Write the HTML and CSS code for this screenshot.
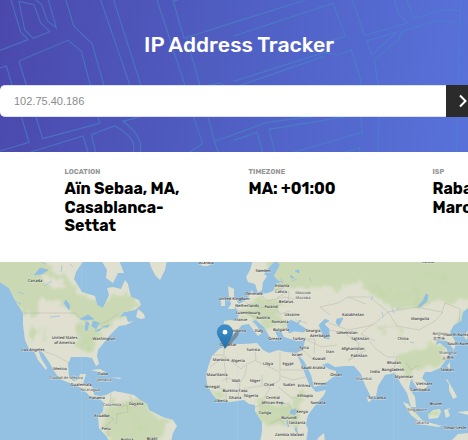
FILE: index.html
```html
<!DOCTYPE html>
<html lang="en">
<head>
<meta charset="utf-8">
<title>IP Address Tracker</title>
<link rel="stylesheet" href="styles.css">
</head>
<body>
<header class="hero">
  <svg class="streets" viewBox="0 0 1404 456" preserveAspectRatio="none" aria-hidden="true">
    <path d="M33 0L62 96L84 119L0 151M57 4L102 14L122 69L149 95L100 115L74 89ZM108 0L125 14L142 63L169 83L145 0M198 0L221 78L276 131L312 256M57 183L204 121L244 153L271 256M57 183L128 416L299 370L294 350M0 204L19 198L87 427L0 453M302 0L390 256M341 0L423 256M471 0L555 256M519 0L552 115L702 67M519 4L534 0M560 115L600 256M92 456L249 408L264 456M287 456L274 404L345 377C390 404 408 425 400 456M420 456C429 425 410 395 369 364L420 350M580 350L608 431L570 456M624 350L643 424L702 404M620 256L658 249L677 256M643 424L655 456"/>
    <path transform="translate(702 0)" d="M0 67L215 0M0 108L297 10L334 109L285 124M0 244L270 157L310 165L351 149L380 239V256M18 256L270 169M355 0L392 106L521 69L493 40L481 0M519 0L540 57L617 30L680 32M680 0L672 256M398 123L488 96L414 165ZM433 256L421 179L493 120L505 94L617 60L674 69M0 403L97 367L235 350M0 421L69 397L86 456M122 456L105 388L335 350M181 456L385 397L380 350M278 475L376 443L378 456M435 350L431 456M670 350L667 456"/>
  </svg>
  <h1 class="title">IP Address Tracker</h1>
  <form class="search">
    <input class="search-input" type="text" placeholder="102.75.40.186" aria-label="IP address">
    <button class="search-button" type="button" aria-label="Search"><svg class="chevron" viewBox="0 0 11 14"><path d="M2 1.500L7.500 7L2 12.500"/></svg></button>
  </form>
</header>
<main>
  <section class="details">
    <div class="detail"><h2 class="label">LOCATION</h2><p class="value">Aïn Sebaa, MA,<br>Casablanca-<br>Settat</p></div>
    <div class="detail"><h2 class="label">TIMEZONE</h2><p class="value zone">MA: +01:00</p></div>
    <div class="detail"><h2 class="label">ISP</h2><p class="value">Rabat<br>Maroc</p></div>
  </section>
  <svg class="map" viewBox="0 262 468 178" role="img" aria-label="World map">
    <defs>
      <filter id="soft" x="-20%" y="-20%" width="140%" height="140%">
        <feTurbulence type="fractalNoise" baseFrequency=".09" numOctaves="3" seed="4" result="noise"/>
        <feDisplacementMap in="SourceGraphic" in2="noise" scale="16" xChannelSelector="R" yChannelSelector="G" result="rough"/>
        <feGaussianBlur in="rough" stdDeviation=".8"/>
      </filter>
      <linearGradient id="pin" x1="0" y1="0" x2="0" y2="1"><stop stop-color="#3e91ce"/><stop offset="1" stop-color="#236fab"/></linearGradient>
      <path id="land" d="M0 260V282L9 288L16 302L23 313L23 325L25 340L29 349L34 351L38 360L46 370L47 368L41 358L38 350L43 353L49 362L56 374L62 380L72 384L81 388L88 394L91 398L98 397L104 403L103 411L98 417L99 428L106 436L110 442H171L173 433L177 426L173 420L163 417L155 413L149 410L147 404L139 399L134 395L125 393L114 391L106 395L101 396L94 395L93 388L88 384L83 384L86 374L80 374L78 380L73 381L69 376L68 364L71 357L86 357L92 358L96 366L99 364L97 356L98 350L106 340L110 335L119 326L126 325L134 321L128 322L126 316L119 317L124 312L135 310L141 305L139 300L131 297L128 284L125 280L121 289L113 287L107 288L109 295L103 308L97 305L95 296L82 292L74 279L76 272L84 260Z
      M149 260L151 267L155 275L160 280L165 270L167 260ZM199 260L202 266H208L213 262V260ZM101 260L107 270L106 278L113 283L118 273L124 273L119 260Z
      M136 317L138 309L144 314L145 318L141 319ZM225 298V306L221 306L221 300ZM229 296L228 286L234 289L234 297L239 304L234 309H228L231 304Z
      M253 260L250 270L246 277L248 282L255 284L258 293L262 290L263 282L267 276L264 274L270 266L276 260L280 265L274 276L279 281L287 280L276 284L273 291L268 293L260 294L254 294L252 290L249 296L243 302L235 305L237 310L239 314L237 321L230 320L224 321L223 334L227 338L231 338L237 331L242 325L249 324L254 331L258 336L262 333L256 325L252 321L256 320L264 327L269 336L274 341L278 338L275 331L281 331L284 337L297 341L305 340L303 350L296 353L286 352L278 350L269 353L263 350L257 343L244 344L230 344L224 347L219 349L212 356L208 367L206 375L207 384L212 394L218 400L230 402L244 400L249 404L255 405L255 411L262 422L262 431L260 442H306L308 430L306 424L308 415L317 403L324 395L326 390L316 392L309 384L301 364L297 354L304 361L311 375L314 387L324 384L336 375L336 371L329 369L322 365L328 363L335 367L345 366L354 366L361 374L365 385L371 397L376 396L378 386L385 375L395 373L401 384L407 393L411 407L416 407L415 397L409 388L411 379L419 391L425 391L428 384L422 378L425 372L431 372L440 368L448 357L447 349L440 343L436 345L437 340L447 341L454 350L456 343L450 332L454 325L461 321L463 312L468 308V260Z
      M425 442L442 442L452 440L458 434L468 433V442ZM440 409L433 410L428 415L429 419L438 418L441 412ZM403 402L408 404L422 420L420 422L411 415ZM414 423L438 427L442 426L420 420ZM446 380L449 384L449 390L453 399L457 397L454 391L447 379ZM444 410L446 418L450 416L448 410L451 408L444 410ZM457 412L468 415V411ZM91 370L100 369L107 373H102ZM111 377L122 378L119 379ZM316 442L318 438L324 433L325 442ZM367 397L370 397L371 401L368 402ZM447 366L450 362L450 370ZM464 337L467 340L468 330Z"/>
      <clipPath id="coast"><use href="#land"/></clipPath>
    </defs>
    <path class="water" d="M0 262H468V440H0Z"/>
    <use href="#land" class="land"/>
    <g clip-path="url(#coast)">
      <g class="forest" filter="url(#soft)">
        <path d="M-10 250H42L55 272L70 275L79 293L98 303L112 295L121 293L133 296L143 306L130 312L119 320L102 329L85 320L72 315L65 303L42 298L37 316L24 315L15 300L-10 277Z"/>
        <path d="M27 326L37 325L39 338L32 343L27 334ZM82 321L98 328L101 337L85 352L76 351V333ZM112 398L145 401L151 412L170 419L164 432L151 450H117L106 430L104 415Z"/>
        <path d="M265 250H360V281L340 289L300 286L273 290ZM352 250H480V298L430 305L392 307L361 284ZM237 310L275 302L287 328L262 326ZM244 300H280L277 306H247ZM255 400L289 403L295 414L281 426L259 421ZM394 357L407 350L433 344L446 346L437 367L418 369L406 378L400 366Z"/>
        <path d="M210 389H223L226 398H215ZM297 393L305 390L301 414L295 429L287 425ZM429 411H440V419H429ZM408 405L421 420L412 417ZM455 316L468 311V325L457 329Z"/>
      </g>
      <path class="desert" filter="url(#soft)" d="M39 299L62 302L72 314L74 325H60L35 319ZM36 272L60 279L68 286L50 291ZM52 250L68 250L76 275L67 270ZM117 392L132 396L124 404L116 402ZM285 300L360 303L384 314L368 330H315Z"/>
      <path class="range" filter="url(#soft)" d="M30 331L35 337M43 328L47 342M79 329L88 331M91 337L82 351M360 291L371 286L383 291L395 289M392 299L415 293L425 305M378 329L400 330L408 338M118 411L130 409L139 425L151 429M266 407L287 411L276 421M413 281L429 271L447 279"/>
    </g>
    <g class="borders">
      <path d="M24 313H75L83 320L93 326L106 322L118 314M35 351H43L55 355L69 363M76 386L84 390M111 393L110 402L119 407L127 405L128 412L117 414L116 424M130 395L133 405M140 398V405L134 407M102 413L114 419L106 426L110 437M213 355H224V348M224 356L241 369L247 364L256 360L255 351M210 367L225 356M224 360L227 383M247 365L245 375L240 383M256 361L280 372V380L274 384M262 375L262 386L247 388M280 352V370H302M281 376L293 380L306 377M263 385L270 388L264 398M278 387L292 398L303 396M255 407L269 402L289 404M270 424L280 419L288 428M289 405L293 411L285 419M222 381L229 378L240 384L238 397M213 388L226 389V399M245 387L244 398"/>
      <path d="M244 300L250 307L259 307M260 294L267 301L285 297L294 299M259 308L274 306L280 314L290 311M237 310L255 317L267 318M274 290L284 288L281 278M277 298L289 291L288 304M295 320L307 323M303 339L315 339L314 354M307 340L322 347L337 345M329 330L344 333L359 343L357 354L348 360M348 361L366 350M369 341L376 349L387 357L397 357L394 369M330 315L320 307L338 303L348 297L366 304M329 323L348 330L373 325L388 312L370 297L348 297M372 324L361 334L375 341M388 312L416 307L442 312L445 303L460 309L459 324M388 312L397 326L419 330L435 321L441 314M419 365L411 370L406 362M408 375L417 384M291 350L303 350L314 360"/>
    </g>
    <g class="lakes">
      <path d="M36 273L40 268L48 270L42 274L34 275ZM66 300L70 306L69 310L64 303ZM80 319L88 315L94 319L87 320ZM86 322L89 323L87 331L85 329ZM93 321L99 323L96 329L92 326ZM95 331L102 328L99 331ZM102 327L109 325L108 327ZM288 329L287 323L291 320L297 323L301 320L298 324L306 329L304 332L294 331L289 333ZM322 322L325 319L329 321L324 324L329 329L329 339L324 338L322 332L319 325ZM337 319L343 318L339 326L336 323ZM418 306L423 301L426 294L428 295L427 301L420 307ZM291 410L296 409L295 415L290 413ZM287 420L289 427L287 424ZM296 427L298 434L295 430ZM295 271L299 270L299 273ZM291 275L294 278L291 278Z"/>
      <path d="M44 286L52 281M62 265L61 272M15 301L21 304M73 267L70 264M18 292L24 294M40 261L46 264M50 317L60 316M373 296L371 300M382 312L383 317M392 309L394 313M397 310L399 307M441 314L443 312M410 342L414 343M292 281L297 279M309 278L312 281"/>
    </g>
    <path class="tile-line" d="M81.500 262V440M237.500 350V440M393.500 350V440"/>
    <g class="names">
      <text x="35" y="281.700">Canada</text><text x="64.500" y="339">United States</text><text x="64.500" y="343.700">of America</text><text x="104" y="340">Washington</text><text x="33" y="350.500">Los Angeles</text>
      <text x="60" y="370">Mexico</text><text class="minor" x="66" y="378.500">Ciudad de México</text><text x="81" y="385.500">Guatemala</text><text class="minor" x="90" y="391">Nicaragua</text><text x="97" y="398.500">Panama</text><text x="103" y="375">Cuba</text><text class="minor" x="104" y="381">Jamaica</text><text class="minor" x="112" y="406">Colombia</text><text x="136" y="405">Guyana</text><text x="102" y="416.500">Ecuador</text><text x="106" y="429.500">Peru</text><text x="127" y="441">Bolivia</text><text x="152" y="439.500">Brazil</text>
      <text x="206" y="264">Islandia</text><text x="234" y="299.700">United Kingdom</text><text x="263" y="271.500">Sweden</text><text x="282" y="287">Estonia</text><text x="281" y="292.500">Latvia</text><text x="254" y="294.500">Denmark</text><text class="minor" x="303" y="293.500">Moscow</text><text class="minor" x="303" y="298.500">Москва</text><text x="286" y="302.500">Belarus</text><text x="271" y="307.500">Poland</text><text x="247" y="306.700">Netherlands</text><text x="248" y="313.500">Luxembourg</text><text x="292" y="315.500">Ukraine</text><text x="263" y="319">Austria</text><text x="241" y="321">France</text><text x="280" y="323">Romania</text><text x="281" y="331">Bulgaria</text><text x="259" y="331.500">Italy</text><text x="238" y="331.500">Andorra</text><text x="275" y="339.500">Greece</text><text x="299" y="339.500">Turkey</text><text x="313" y="332">Georgia</text><text x="320" y="337">Azerbaijan</text><text x="304" y="348.500">Syria</text><text x="253" y="350.500">Tunisia</text><text x="228" y="345.500">Gibraltar</text>
      <text x="353" y="316">Kazakhstan</text><text x="347" y="333.500">Uzbekistan</text><text x="360" y="340">Tajikistan</text><text x="353" y="350">Afghanistan</text><text x="420" y="320">Mongolia</text><text x="403" y="340">China</text><text class="minor" x="439" y="334.500">Beijing</text><text class="minor" x="439" y="339.500">北京市</text><text x="457" y="336">North Korea</text><text x="459" y="344.500">South Korea</text><text x="428" y="263">Russia</text>
      <text x="221" y="360.500">Morocco</text><text x="238" y="361.500">Algeria</text><text x="268" y="365">Libya</text><text x="288" y="364.500">Egypt</text><text x="297" y="355.500">Israel</text><text x="217" y="375.500">Mauritania</text><text x="236" y="382">Mali</text><text x="255" y="382">Niger</text><text x="269" y="385.500">Chad</text><text x="289" y="385.500">Sudan</text><text x="304" y="386.500">Eritrea</text><text x="212" y="387.700">Senegal</text><text x="235" y="391.700">Burkina Faso</text><text x="235" y="399">Ghana</text><text x="251" y="397">Nigeria</text><text x="221" y="401.500">Liberia</text><text x="273" y="399">Central</text><text x="273" y="403.700">African Rep.</text><text x="305" y="397">Ethiopia</text><text x="265" y="414">Congo</text><text x="302" y="412.700">Kenya</text><text x="289" y="418.700">Burundi</text><text x="297" y="424">Tanzania</text><text x="282" y="436">Zambia</text><text x="297" y="436">Malawi</text>
      <text x="330" y="353">Iran</text><text x="319" y="360">Kuwait</text><text x="313" y="369">Saudi Arabia</text><text x="336" y="376">Oman</text><text x="320" y="385">Yemen</text><text x="318" y="404">Somalia</text><text x="359" y="357">Pakistan</text><text x="375" y="373">India</text><text class="minor" x="364" y="379.500">Mumbai</text><text x="377" y="399">Sri Lanka</text><text x="394" y="363.500">Bhutan</text><text x="393" y="371">Bangladesh</text><text x="404" y="378">Myanmar</text><text x="424" y="385">Vietnam</text><text x="420" y="391">Cambodia</text><text x="447" y="371">Taiwan</text><text class="minor" x="448" y="353.500">Shanghai</text><text class="minor" x="448" y="358.500">上海市</text><text class="minor" x="417" y="410.500">Singapore</text><text x="436" y="405">Brunei</text><text class="minor" x="422" y="423.500">Jakarta</text><text x="455" y="428.500">Timor-Leste</text>
    </g>
    <path class="shadow" d="M225 347L235 332Q238 330 239 333Q238 338 226 348Z"/>
    <path class="pin" fill="url(#pin)" d="M225 348.500L219.500 338.500C217.800 335.500 217.300 334 217.300 332.200C217.300 328 220.800 324.700 225 324.700S232.700 328 232.700 332.200C232.700 334 232.200 335.500 230.500 338.500Z"/>
    <circle class="pin-dot" cx="225" cy="332.200" r="2.400"/>
  </svg>
</main>
</body>
</html>
```
FILE: styles.css
```css
* { box-sizing: border-box; }

body {
  margin: 0;
  width: 468px;
  height: 440px;
  overflow: hidden;
  background: #fff;
  font-family: Rubik, Roboto, "Liberation Sans", sans-serif;
}

.hero {
  position: relative;
  height: 152px;
  padding-top: 32px;
  overflow: hidden;
  background: linear-gradient(98deg, #4b48ac 0%, #5060c4 52%, #5872da 100%);
}

.streets {
  position: absolute;
  inset: 0;
  width: 100%;
  height: 100%;
  fill: none;
  stroke: #4689c6;
  stroke-width: 3.5;
  opacity: .6;
}

.title {
  position: relative;
  margin: 0 0 27px;
  padding-left: 144px;
  color: #fff;
  font-size: 21.330px;
  line-height: 26px;
  font-weight: 500;
  white-space: nowrap;
}

.search {
  position: relative;
  display: flex;
  height: 32px;
}

.search-input {
  flex: none;
  width: 446px;
  padding: 0 14px;
  border: 1px solid #dce0f5;
  border-width: 1px 0;
  border-radius: 5px 0 0 5px;
  background: #fff;
  font: 11px "Liberation Sans", sans-serif;
}

.search-input::placeholder { color: #8b8b8b; }

.search-button {
  display: flex;
  align-items: center;
  width: 31px;
  flex: none;
  padding: 0 0 0 12px;
  border: 0;
  background: #2b2b2b;
}

.chevron {
  flex: none;
  width: 11px;
  height: 14px;
  fill: none;
  stroke: #fff;
  stroke-width: 2;
}

.details {
  display: grid;
  grid-template-columns: repeat(3, 184px);
  height: 110px;
  padding: 15px 0 0 64.500px;
  overflow: hidden;
}

.label {
  margin: 0 0 3px;
  color: #969696;
  font-size: 7px;
  line-height: 10px;
  font-weight: 700;
  letter-spacing: .1px;
}

.value {
  margin: 0;
  color: #000;
  font-size: 15.900px;
  line-height: 18.600px;
  font-weight: 700;
  white-space: nowrap;
}

.map {
  display: block;
  width: 468px;
  height: 178px;
}

.water { fill: #94c1e1; }
.land { fill: #dfe0d0; }
.forest { fill: #c8d9b0; opacity: .9; }
.desert { fill: #e0dfd0; }
.range { fill: none; stroke: #c0d4a4; stroke-width: 2; opacity: .6; }
.borders { fill: none; stroke: #a9a6a4; stroke-width: .6; opacity: .6; }
.lakes { fill: #8fbfe2; stroke: #8fbfe2; stroke-width: .7; }
.tile-line { fill: none; stroke: #b7d8ec; stroke-width: .5; opacity: .5; }

.names {
  fill: #2c2c33;
  stroke: #f1f1e9;
  stroke-width: .8px;
  stroke-opacity: .6;
  paint-order: stroke;
  font: 500 4px "Noto Sans", "Noto Sans CJK SC", sans-serif;
  text-anchor: middle;
  text-rendering: geometricPrecision;
}

.minor { fill: #5c5e66; }
.pin { stroke: #2b70a6; stroke-width: .6; }
.pin-dot { fill: #fff; }
.shadow { fill: #333; opacity: .35; }
```
